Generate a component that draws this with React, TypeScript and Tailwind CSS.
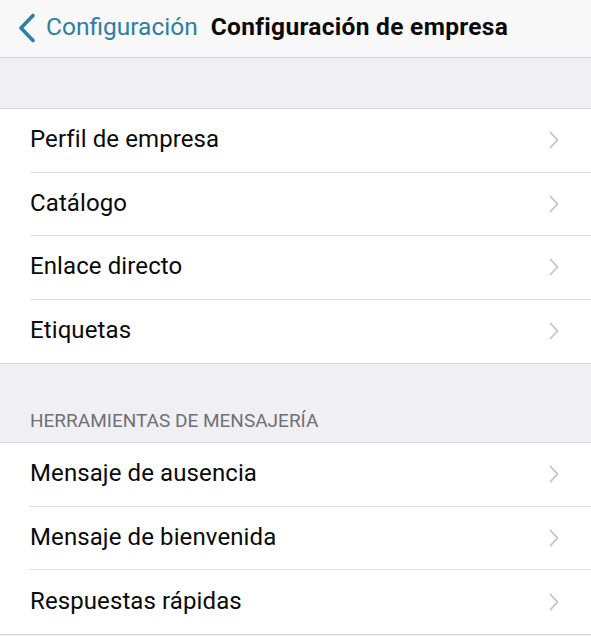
import React from "react";

const font = { fontFamily: "Roboto, 'Noto Sans', sans-serif" };

function Chevron() {
  return (
    <svg width="10" height="18" viewBox="0 0 10 18" fill="none" className="shrink-0">
      <path d="M1.5 1.5 L8.5 9 L1.5 16.5" stroke="#c4c4c8" strokeWidth="1.8" strokeLinecap="round" strokeLinejoin="round" />
    </svg>
  );
}

function Row({ label, last }: { label: string; last?: boolean }) {
  return (
    <div className="flex pl-[30px]">
      <div className={`flex h-[63.5px] flex-1 items-center justify-between pr-[32px] ${last ? "" : "border-b border-[#e0e0e4]"}`}>
        <span className="pb-[2px] text-[24px] tracking-[0.1px] text-[#0a0a0a]">{label}</span>
        <Chevron />
      </div>
    </div>
  );
}

export default function App() {
  const business = ["Perfil de empresa", "Catálogo", "Enlace directo", "Etiquetas"];
  const tools = ["Mensaje de ausencia", "Mensaje de bienvenida", "Respuestas rápidas"];
  return (
    <div className="h-[636px] w-[591px] overflow-hidden bg-[#efeff4]" style={font}>
      <div className="flex h-[58px] items-center border-b border-[#d4d4d8] bg-[#f8f8f8] pb-[2px] pl-[18px]">
        <svg width="18" height="30" viewBox="0 0 18 30" fill="none" className="mr-[10px] shrink-0">
          <path d="M15 2.5 L3 15 L15 27.5" stroke="#2e7fa3" strokeWidth="3.6" strokeLinecap="round" strokeLinejoin="round" />
        </svg>
        <span className="text-[24.5px] text-[#2e7fa3]">Configuración</span>
        <span className="ml-[13px] text-[24.5px] font-bold tracking-[0.3px] text-[#0a0a0a]">Configuración de empresa</span>
      </div>
      <div className="h-[50px]" />
      <div className="border-y border-[#d8d8dc] bg-white">
        {business.map((l, i) => (
          <Row key={l} label={l} last={i === business.length - 1} />
        ))}
      </div>
      <div className="flex h-[78px] items-end pb-[9px] pl-[30px]">
        <span className="text-[19px] leading-[24px] text-[#707074]">HERRAMIENTAS DE MENSAJERÍA</span>
      </div>
      <div className="border-y border-[#d8d8dc] bg-white">
        {tools.map((l, i) => (
          <Row key={l} label={l} last={i === tools.length - 1} />
        ))}
      </div>
    </div>
  );
}
